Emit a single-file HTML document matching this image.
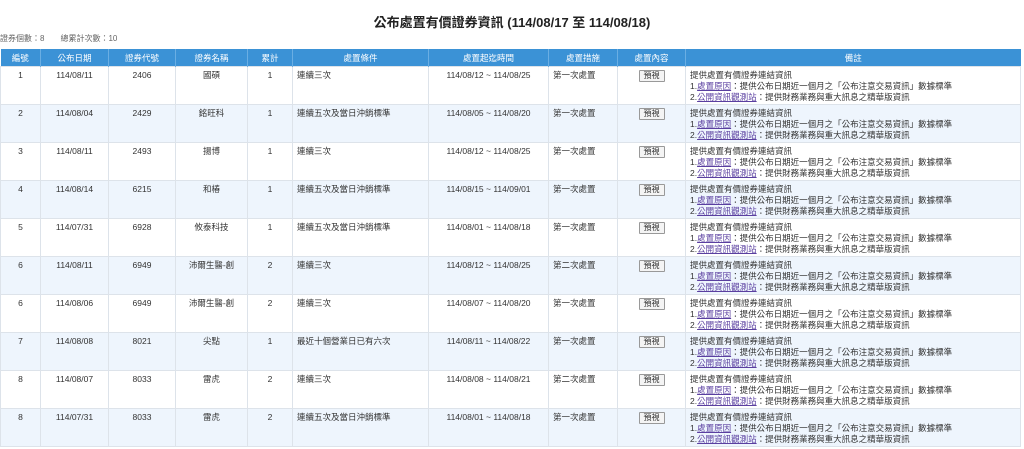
<!DOCTYPE html>
<html><head><meta charset="utf-8"><style>
body{margin:0;width:1024px;height:449px;background:#fff;font-family:"Liberation Sans","Noto Sans CJK TC",sans-serif;color:#333;overflow:hidden}
h1{position:absolute;top:12px;left:0;width:1024px;text-align:center;font-size:13px;font-weight:bold;margin:0;color:#222}
.info{position:absolute;top:33px;left:0;font-size:8px;color:#666}
table{position:absolute;top:49px;left:0;border-collapse:collapse;table-layout:fixed;width:1020px;font-size:8.5px}
th{background:#3b92d6;color:#fff;font-weight:normal;height:17px;padding:0;border-left:1px solid #6aaee3;text-align:center}
th:first-child{border-left:none}
td{height:38px;vertical-align:top;padding:3px 4px 0;border:1px solid #dde3ea;text-align:center;line-height:11px;box-sizing:border-box}
tr:nth-child(odd) td{background:#eef5fd}
td.l{text-align:left}
a{color:#5a3fa0;text-decoration:underline}
.b{display:inline-block;border:1px solid #999;background:#f4f4f4;padding:0 4px;font-size:8px;line-height:10px;border-radius:1px}
</style></head><body>
<h1>公布處置有價證券資訊 (114/08/17 至 114/08/18)</h1>
<div class="info">證券個數：8　　總累計次數：10</div>
<table>
<colgroup><col style="width:40px"><col style="width:68px"><col style="width:67px"><col style="width:72px"><col style="width:45px"><col style="width:136px"><col style="width:120px"><col style="width:69px"><col style="width:68px"><col style="width:335px"></colgroup>
<tr><th>編號</th><th>公布日期</th><th>證券代號</th><th>證券名稱</th><th>累計</th><th>處置條件</th><th>處置起迄時間</th><th>處置措施</th><th>處置內容</th><th>備註</th></tr>
<tr><td>1</td><td>114/08/11</td><td>2406</td><td>國碩</td><td>1</td><td class="l">連續三次</td><td>114/08/12 ~ 114/08/25</td><td class="l">第一次處置</td><td><span class="b">預視</span></td><td class="l">提供處置有價證券連結資訊<br>1.<a>處置原因</a>：提供公布日期近一個月之「公布注意交易資訊」數據標準<br>2.<a>公開資訊觀測站</a>：提供財務業務與重大訊息之精華版資訊</td></tr>
<tr><td>2</td><td>114/08/04</td><td>2429</td><td>銘旺科</td><td>1</td><td class="l">連續五次及當日沖銷標準</td><td>114/08/05 ~ 114/08/20</td><td class="l">第一次處置</td><td><span class="b">預視</span></td><td class="l">提供處置有價證券連結資訊<br>1.<a>處置原因</a>：提供公布日期近一個月之「公布注意交易資訊」數據標準<br>2.<a>公開資訊觀測站</a>：提供財務業務與重大訊息之精華版資訊</td></tr>
<tr><td>3</td><td>114/08/11</td><td>2493</td><td>揚博</td><td>1</td><td class="l">連續三次</td><td>114/08/12 ~ 114/08/25</td><td class="l">第一次處置</td><td><span class="b">預視</span></td><td class="l">提供處置有價證券連結資訊<br>1.<a>處置原因</a>：提供公布日期近一個月之「公布注意交易資訊」數據標準<br>2.<a>公開資訊觀測站</a>：提供財務業務與重大訊息之精華版資訊</td></tr>
<tr><td>4</td><td>114/08/14</td><td>6215</td><td>和椿</td><td>1</td><td class="l">連續五次及當日沖銷標準</td><td>114/08/15 ~ 114/09/01</td><td class="l">第一次處置</td><td><span class="b">預視</span></td><td class="l">提供處置有價證券連結資訊<br>1.<a>處置原因</a>：提供公布日期近一個月之「公布注意交易資訊」數據標準<br>2.<a>公開資訊觀測站</a>：提供財務業務與重大訊息之精華版資訊</td></tr>
<tr><td>5</td><td>114/07/31</td><td>6928</td><td>攸泰科技</td><td>1</td><td class="l">連續五次及當日沖銷標準</td><td>114/08/01 ~ 114/08/18</td><td class="l">第一次處置</td><td><span class="b">預視</span></td><td class="l">提供處置有價證券連結資訊<br>1.<a>處置原因</a>：提供公布日期近一個月之「公布注意交易資訊」數據標準<br>2.<a>公開資訊觀測站</a>：提供財務業務與重大訊息之精華版資訊</td></tr>
<tr><td>6</td><td>114/08/11</td><td>6949</td><td>沛爾生醫-創</td><td>2</td><td class="l">連續三次</td><td>114/08/12 ~ 114/08/25</td><td class="l">第二次處置</td><td><span class="b">預視</span></td><td class="l">提供處置有價證券連結資訊<br>1.<a>處置原因</a>：提供公布日期近一個月之「公布注意交易資訊」數據標準<br>2.<a>公開資訊觀測站</a>：提供財務業務與重大訊息之精華版資訊</td></tr>
<tr><td>6</td><td>114/08/06</td><td>6949</td><td>沛爾生醫-創</td><td>2</td><td class="l">連續三次</td><td>114/08/07 ~ 114/08/20</td><td class="l">第一次處置</td><td><span class="b">預視</span></td><td class="l">提供處置有價證券連結資訊<br>1.<a>處置原因</a>：提供公布日期近一個月之「公布注意交易資訊」數據標準<br>2.<a>公開資訊觀測站</a>：提供財務業務與重大訊息之精華版資訊</td></tr>
<tr><td>7</td><td>114/08/08</td><td>8021</td><td>尖點</td><td>1</td><td class="l">最近十個營業日已有六次</td><td>114/08/11 ~ 114/08/22</td><td class="l">第一次處置</td><td><span class="b">預視</span></td><td class="l">提供處置有價證券連結資訊<br>1.<a>處置原因</a>：提供公布日期近一個月之「公布注意交易資訊」數據標準<br>2.<a>公開資訊觀測站</a>：提供財務業務與重大訊息之精華版資訊</td></tr>
<tr><td>8</td><td>114/08/07</td><td>8033</td><td>雷虎</td><td>2</td><td class="l">連續三次</td><td>114/08/08 ~ 114/08/21</td><td class="l">第二次處置</td><td><span class="b">預視</span></td><td class="l">提供處置有價證券連結資訊<br>1.<a>處置原因</a>：提供公布日期近一個月之「公布注意交易資訊」數據標準<br>2.<a>公開資訊觀測站</a>：提供財務業務與重大訊息之精華版資訊</td></tr>
<tr><td>8</td><td>114/07/31</td><td>8033</td><td>雷虎</td><td>2</td><td class="l">連續五次及當日沖銷標準</td><td>114/08/01 ~ 114/08/18</td><td class="l">第一次處置</td><td><span class="b">預視</span></td><td class="l">提供處置有價證券連結資訊<br>1.<a>處置原因</a>：提供公布日期近一個月之「公布注意交易資訊」數據標準<br>2.<a>公開資訊觀測站</a>：提供財務業務與重大訊息之精華版資訊</td></tr>
</table>
</body></html>
